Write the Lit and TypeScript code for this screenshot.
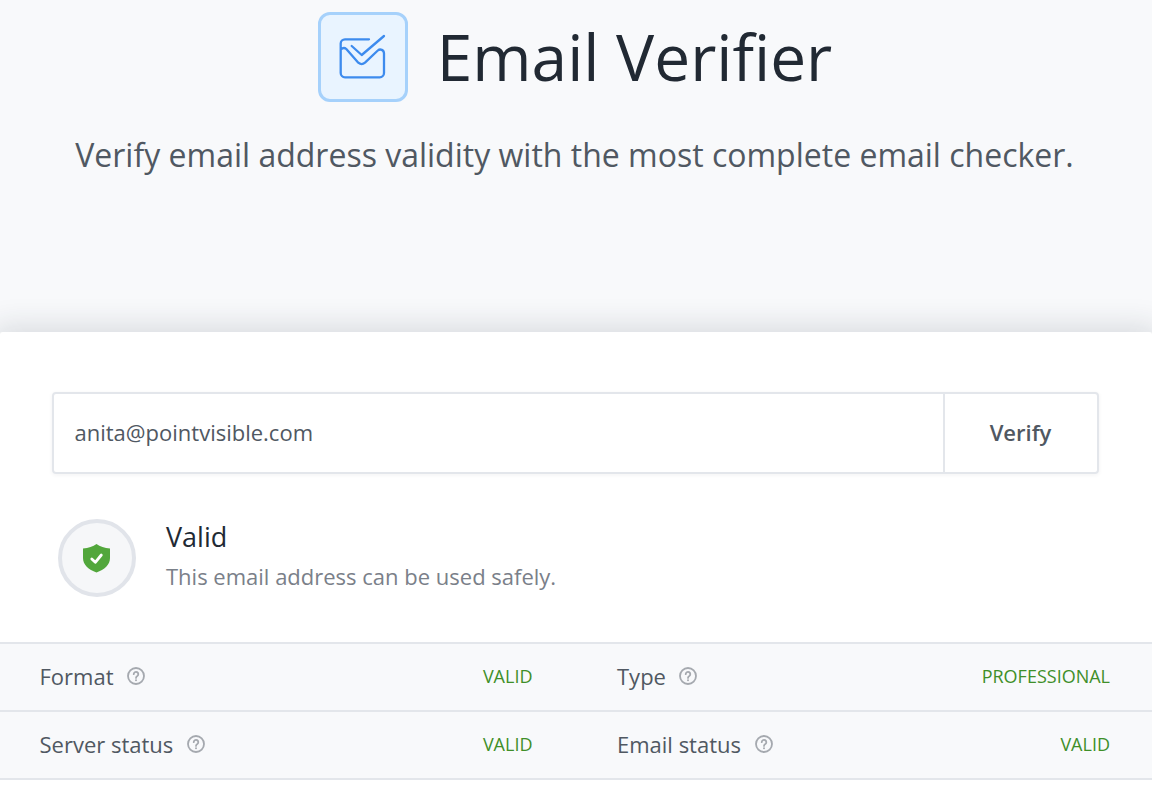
import { LitElement, html, css, svg } from 'lit'
import { customElement } from 'lit/decorators.js'

const help = svg`<svg class="help" viewBox="0 0 18 18" width="18" height="18" fill="none">
  <circle cx="9" cy="9" r="8" stroke="#a5a9af" stroke-width="1.8"/>
  <path d="M6.7 7.2a2.3 2.3 0 1 1 3.6 1.9c-.8.5-1.3.9-1.3 1.8" stroke="#a5a9af" stroke-width="1.8" stroke-linecap="round"/>
  <circle cx="9" cy="13.2" r="1" fill="#a5a9af"/>
</svg>`

const rows = [
  [
    ['Format', 'VALID'],
    ['Type', 'PROFESSIONAL'],
  ],
  [
    ['Server status', 'VALID'],
    ['Email status', 'VALID'],
  ],
]

@customElement('app-root')
class App extends LitElement {
  static styles = css`
    :host {
      display: block;
      height: 788px;
      overflow: hidden;
      background: #fff;
      font-family: 'Open Sans', 'Liberation Sans', sans-serif;
      color: #505862;
    }
    .hero {
      height: 332px;
      box-sizing: border-box;
      background: #f8f9fb;
      padding-top: 12px;
      text-align: center;
    }
    .brand {
      display: flex;
      justify-content: center;
      align-items: center;
      gap: 29px;
      padding-right: 2px;
    }
    .logo {
      width: 90px;
      height: 90px;
      box-sizing: border-box;
      display: flex;
      align-items: center;
      justify-content: center;
      background: #e9f4ff;
      border: 3px solid #a6d1fb;
      border-radius: 12px;
    }
    h1 {
      margin: 0;
      font-size: 64px;
      line-height: 90px;
      font-weight: 400;
      color: #212933;
    }
    .sub {
      margin: 28px 0 0;
      padding-right: 3px;
      font-size: 32px;
      line-height: 50px;
      color: #505862;
    }
    .card {
      position: relative;
      height: 456px;
      box-sizing: border-box;
      background: #fff;
      padding-top: 60px;
      border-radius: 3px 3px 0 0;
      box-shadow: 0 2px 30px 8px rgba(30, 40, 55, 0.14);
    }
    .search {
      display: flex;
      height: 82px;
      box-sizing: border-box;
      margin: 0 53px 0 52px;
      border: 2px solid #e3e6eb;
      border-radius: 4px;
      box-shadow: 0 1px 4px rgba(30, 40, 55, 0.06);
      font-size: 22px;
    }
    .email {
      flex: 1;
      display: flex;
      align-items: center;
      padding: 0 0 2px 20.5px;
    }
    .verify {
      width: 151px;
      display: flex;
      align-items: center;
      justify-content: center;
      padding: 0 1px 2px 0;
      border-left: 2px solid #e3e6eb;
      font-weight: 600;
    }
    .result {
      display: flex;
      align-items: flex-start;
      margin: 45px 0 0 58px;
      gap: 30px;
    }
    .badge {
      width: 78px;
      height: 78px;
      box-sizing: border-box;
      display: flex;
      align-items: center;
      justify-content: center;
      padding-right: 1px;
      background: #f6f7f9;
      border: 4px solid #e1e4ea;
      border-radius: 50%;
    }
    .title {
      font-size: 27px;
      line-height: 36px;
      color: #212933;
    }
    .note {
      margin-top: 6px;
      font-size: 22px;
      line-height: 30px;
      color: #7a8089;
    }
    .table {
      margin-top: 45px;
      border-top: 2px solid #e3e6eb;
    }
    .row {
      display: flex;
      height: 68px;
      box-sizing: border-box;
      background: #f8f9fb;
      border-bottom: 2px solid #e3e6eb;
      padding: 0 42px 2px 39.5px;
    }
    .cell {
      display: flex;
      align-items: center;
      font-size: 22px;
    }
    .cell.left {
      width: 493px;
      margin-right: 84.5px;
    }
    .cell.right {
      flex: 1;
    }
    .label {
      margin-right: 13.5px;
    }
    .help {
      display: block;
    }
    .value {
      margin-left: auto;
      font-size: 18px;
      color: #3f8f29;
    }
  `

  render() {
    return html`
      <div class="hero">
        <div class="brand">
          <div class="logo">
            <svg viewBox="39 34 48 46" width="48" height="46" fill="none" stroke="#3d8bee" stroke-width="2.300" stroke-linecap="round" stroke-linejoin="round">
              <path d="M69 39.300H45a4.300 4.300 0 0 0-4.300 4.300v29.400a4.300 4.300 0 0 0 4.300 4.300h34.700a4.300 4.300 0 0 0 4.300-4.300V53.500c0-3.500-3.700-5.200-6.200-3L65 62.700c-2 1.700-4.700 1.700-6.700 0L46.300 49c-1.700-1.500-4-1-5.600 .8"/>
              <path d="M51.700 46l10 9L84 36"/>
            </svg>
          </div>
          <h1>Email Verifier</h1>
        </div>
        <p class="sub">Verify email address validity with the most complete email checker.</p>
      </div>
      <div class="card">
        <div class="search">
          <div class="email">anita@pointvisible.com</div>
          <div class="verify">Verify</div>
        </div>
        <div class="result">
          <div class="badge">
            <svg viewBox="0 0 29 30" width="29" height="30">
              <path d="M14.500 1C18 3.500 22.500 5 28 5.500V15c0 7-5.500 11.500-13.500 14.500C6.500 26.500 1 22 1 15V5.500C6.500 5 11 3.500 14.500 1z" fill="#52a73c"/>
              <path d="M9.800 16l3.500 3.300 6-7.300" fill="none" stroke="#fff" stroke-width="2.800" stroke-linecap="round" stroke-linejoin="round"/>
            </svg>
          </div>
          <div>
            <div class="title">Valid</div>
            <div class="note">This email address can be used safely.</div>
          </div>
        </div>
        <div class="table">
          ${rows.map(
            (row) => html`
              <div class="row">
                ${row.map(
                  ([label, value], i) => html`
                    <div class="cell ${i === 0 ? 'left' : 'right'}">
                      <span class="label">${label}</span>
                      ${help}
                      <span class="value">${value}</span>
                    </div>
                  `
                )}
              </div>
            `
          )}
        </div>
      </div>
    `
  }
}
export default App
